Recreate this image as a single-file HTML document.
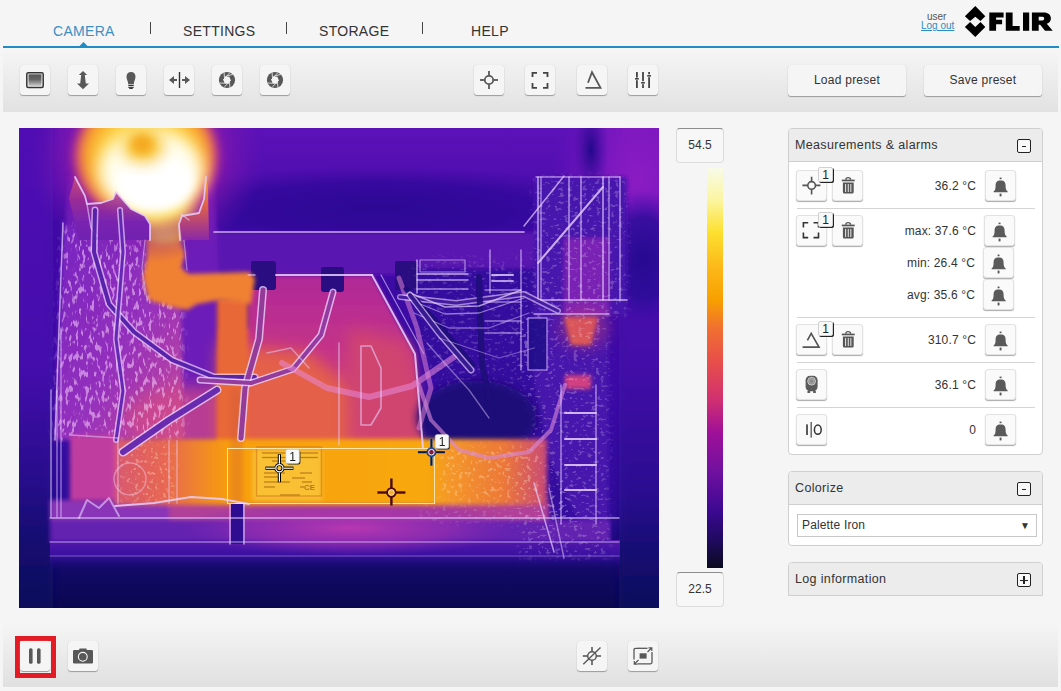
<!DOCTYPE html>
<html><head><meta charset="utf-8">
<style>
*{margin:0;padding:0;box-sizing:border-box}
html,body{width:1061px;height:691px;overflow:hidden;background:#f5f5f5;font-family:"Liberation Sans",sans-serif;color:#333}
.abs{position:absolute}
.nav{font-size:14px;color:#333;top:23px;line-height:16px;letter-spacing:0.3px}
.sep{width:1px;height:12px;background:#444;top:22px}
.bline{left:3px;top:46px;width:1056px;height:2px;background:#1e8cc6}
.tb{left:3px;top:53px;width:1055px;height:59px;background:linear-gradient(#f4f4f4,#e2e2e2)}
.btn{position:absolute;width:30px;height:30px;background:#f5f5f5;border-radius:3px;box-shadow:0 1px 1px #9a9a9a, 0 0 1px #d0d0d0}
.btn svg{position:absolute;left:0;top:0}
.pbtn{position:absolute;height:31px;background:#f5f5f5;border-radius:3px;box-shadow:0 1px 1px #9a9a9a, 0 0 1px #d0d0d0;font-size:12px;color:#333;text-align:center;line-height:31px;letter-spacing:0.25px}
.panel{position:absolute;left:788px;width:255px;background:#fff;border:1px solid #cfcfcf;border-radius:4px;overflow:hidden}
.ph{position:absolute;left:0;top:0;width:100%;height:33px;background:#ececec;border-bottom:1px solid #cfcfcf;font-size:12.5px;color:#333}
.ph span{position:absolute;left:6px;top:9px;letter-spacing:0.35px}
.tog{position:absolute;left:228px;top:10px;width:14px;height:14px;border:1px solid #222;border-radius:2px;background:#f8f8f8}
.mb{position:absolute;width:31px;height:31px;background:#fafafa;border-radius:3px;border:1px solid #e2e2e2;box-shadow:0 1px 1px #aaa}
.badge{position:absolute;width:15px;height:15px;background:#f8f8f8;border:1px solid #d0d0d0;border-radius:2px;box-shadow:1px 1px 0 #222;font-size:12px;line-height:14px;text-align:center;color:#222}
.val{position:absolute;font-size:12px;color:#333;text-align:right;white-space:nowrap;letter-spacing:0.15px}
.hr{position:absolute;left:8px;width:238px;height:1px;background:#d4d4d4}
.cbox{position:absolute;left:676px;width:48px;height:35px;background:#f7f7f7;border:1px solid #dcdcdc;border-top-color:#8c8c8c;border-radius:4px;font-size:12px;text-align:center;line-height:33px;color:#333}
</style></head><body>
<!-- header -->
<div class="abs nav" style="left:53px;color:#3a8fc2">CAMERA</div>
<div class="abs sep" style="left:150px"></div>
<div class="abs nav" style="left:183px">SETTINGS</div>
<div class="abs sep" style="left:286px"></div>
<div class="abs nav" style="left:319px">STORAGE</div>
<div class="abs sep" style="left:422px"></div>
<div class="abs nav" style="left:471px">HELP</div>
<div class="abs" style="left:927px;top:11px;font-size:10px;color:#555">user</div>
<div class="abs" style="left:921px;top:20px;font-size:10px;color:#2a8fc2;text-decoration:underline">Log out</div>
<svg class="abs" style="left:960px;top:0" width="101" height="45" viewBox="960 0 101 45">
<polygon fill="#000" points="975.3,6 985.3,16.2 980.5,21 975.3,16.8 970.1,21 964.9,16.2"/>
<polygon fill="#000" points="964.9,26.9 970.1,22 975.3,26.9 980.5,22 985.3,26.9 975.3,37"/>
</svg>
<svg class="abs" style="left:985px;top:5px" width="76" height="35" viewBox="985 5 76 35">
<path fill="#000" d="M989.3,12.5 H1003.6 V17.5 H996.1 V19.7 H1002.1 V24.3 H996.1 V30.8 H989.3 Z"/>
<path fill="#000" d="M1005.8,12.5 H1012.6 V26.1 H1019.7 V30.8 H1005.8 Z"/>
<path fill="#000" d="M1023,12.5 H1029.2 V30.8 H1023 Z"/>
<path fill="#000" fill-rule="evenodd" d="M1031.9,12.5 H1043.5 C1048.5,12.5 1050.9,15 1050.9,18.6 C1050.9,21.2 1049.3,23 1046.8,23.8 L1052.7,30.8 H1045 L1040.2,24.8 H1038.7 V30.8 H1031.9 Z M1038.7,16.8 V20.4 H1042.5 C1043.6,20.4 1044.2,19.7 1044.2,18.6 C1044.2,17.5 1043.6,16.8 1042.5,16.8 Z"/>
</svg>
<div class="abs bline"></div>
<svg class="abs" style="left:79px;top:42px" width="9" height="5"><polygon points="0,4.5 4.5,0 9,4.5" fill="#1e8cc6"/></svg>
<!-- toolbar -->
<div class="abs tb"></div>
<div class="btn" style="left:20px;top:65px"><svg width="30" height="30" viewBox="0 0 30 30"><rect x="6.8" y="7.8" width="16.4" height="14.6" rx="1.5" fill="none" stroke="#333" stroke-width="1.5"/><defs><linearGradient id="gg" x1="0" y1="0" x2="0" y2="1"><stop offset="0" stop-color="#555"/><stop offset="0.45" stop-color="#666"/><stop offset="1" stop-color="#c8c8c8"/></linearGradient></defs><rect x="8.5" y="9.3" width="13" height="11.6" fill="url(#gg)"/></svg></div>
<div class="btn" style="left:68px;top:65px"><svg width="30" height="30" viewBox="0 0 30 30"><path d="M15,6 L19.2,10 L16.8,10 L17.8,18.5 L21,18.5 L15,24.2 L9,18.5 L12.2,18.5 L13.2,10 L10.8,10 Z" fill="#585858"/></svg></div>
<div class="btn" style="left:116px;top:65px"><svg width="30" height="30" viewBox="0 0 30 30"><path d="M15,7 C17.8,7 19.5,9 19.5,11.8 C19.5,14.8 17.8,16.5 17.8,19.3 L12.2,19.3 C12.2,16.5 10.5,14.8 10.5,11.8 C10.5,9 12.2,7 15,7 Z" fill="#585858"/><rect x="12.3" y="19.9" width="5.4" height="1.1" fill="#333"/><rect x="12.3" y="21.8" width="5.4" height="1.1" fill="#333"/><rect x="13.3" y="23" width="3.4" height="1" fill="#333"/></svg></div>
<div class="btn" style="left:164px;top:65px"><svg width="30" height="30" viewBox="0 0 30 30"><rect x="14.8" y="7" width="1.4" height="16" fill="#333"/><path d="M5,15 L10,11 L10,13.9 L13,13.9 L13,16.1 L10,16.1 L10,19 Z" fill="#585858"/><path d="M26,15 L21,11 L21,13.9 L18,13.9 L18,16.1 L21,16.1 L21,19 Z" fill="#585858"/></svg></div>
<div class="btn" style="left:212px;top:65px"><svg width="30" height="30" viewBox="0 0 30 30"><circle cx="15" cy="15" r="8.1" fill="#585858"/><polygon points="13.2,11.7 17,11.8 18.8,15 16.8,18.3 13,18.2 11.2,15" fill="#f4f4f4"/><g stroke="#f4f4f4" stroke-width="0.8"><line x1="13.2" y1="11.7" x2="21" y2="9.2"/><line x1="17" y1="11.8" x2="18" y2="23"/><line x1="18.8" y1="15" x2="12" y2="22.5"/><line x1="16.8" y1="18.3" x2="7.5" y2="18"/><line x1="13" y1="18.2" x2="12" y2="7.2"/><line x1="11.2" y1="15" x2="18" y2="7.5"/></g></svg></div>
<div class="btn" style="left:260px;top:65px"><svg width="30" height="30" viewBox="0 0 30 30"><circle cx="15" cy="15" r="8.1" fill="#585858"/><polygon points="13.2,11.7 17,11.8 18.8,15 16.8,18.3 13,18.2 11.2,15" fill="#f4f4f4"/><g stroke="#f4f4f4" stroke-width="0.8"><line x1="13.2" y1="11.7" x2="21" y2="9.2"/><line x1="17" y1="11.8" x2="18" y2="23"/><line x1="18.8" y1="15" x2="12" y2="22.5"/><line x1="16.8" y1="18.3" x2="7.5" y2="18"/><line x1="13" y1="18.2" x2="12" y2="7.2"/><line x1="11.2" y1="15" x2="18" y2="7.5"/></g></svg></div>
<div class="btn" style="left:474px;top:65px"><svg width="30" height="30" viewBox="0 0 30 30"><circle cx="15" cy="15" r="4.2" fill="none" stroke="#585858" stroke-width="1.8"/><g stroke="#585858" stroke-width="1.8"><line x1="6" y1="15" x2="10.8" y2="15"/><line x1="19.2" y1="15" x2="24" y2="15"/><line x1="15" y1="6" x2="15" y2="10.8"/><line x1="15" y1="19.2" x2="15" y2="24"/></g></svg></div>
<div class="btn" style="left:525px;top:65px"><svg width="30" height="30" viewBox="0 0 30 30"><path d="M7.5,12 V7.8 H12 M18,7.8 H22.5 V12 M22.5,18 V22.8 H18 M12,22.8 H7.5 V18" fill="none" stroke="#444" stroke-width="1.8"/></svg></div>
<div class="btn" style="left:577px;top:65px"><svg width="30" height="30" viewBox="0 0 30 30"><path d="M8.5,22.8 H23.5 L15,7.2 L11,17.8" fill="none" stroke="#585858" stroke-width="1.8"/></svg></div>
<div class="btn" style="left:628px;top:65px"><svg width="30" height="30" viewBox="0 0 30 30"><g fill="#444"><rect x="8" y="7" width="1.8" height="5.6"/><rect x="7" y="13" width="3.8" height="1.6"/><rect x="8" y="15.2" width="1.8" height="7.8"/><rect x="14.1" y="7" width="1.8" height="9.2"/><rect x="13.1" y="17" width="3.8" height="1.6"/><rect x="14.1" y="19.2" width="1.8" height="3.8"/><rect x="20.2" y="7" width="1.8" height="2.2"/><rect x="19.2" y="10" width="3.8" height="1.6"/><rect x="20.2" y="12.2" width="1.8" height="10.8"/></g></svg></div>
<div class="pbtn" style="left:788px;top:65px;width:118px">Load preset</div>
<div class="pbtn" style="left:924px;top:65px;width:118px">Save preset</div>
<!-- thermal -->
<div id="thermal" class="abs" style="left:19px;top:128px;width:640px;height:480px;background:#3a0a90;overflow:hidden"><svg width="640" height="480" viewBox="0 0 640 480"><defs>
<filter id="b1" x="-10%" y="-10%" width="120%" height="120%"><feGaussianBlur stdDeviation="0.7"/></filter>
<filter id="b2" x="-20%" y="-20%" width="140%" height="140%"><feGaussianBlur stdDeviation="2"/></filter>
<filter id="b4" x="-30%" y="-30%" width="160%" height="160%"><feGaussianBlur stdDeviation="4"/></filter>
<filter id="b8" x="-40%" y="-40%" width="180%" height="180%"><feGaussianBlur stdDeviation="8"/></filter>
<filter id="b15" x="-50%" y="-50%" width="200%" height="200%"><feGaussianBlur stdDeviation="15"/></filter>
<filter id="b25" x="-60%" y="-60%" width="220%" height="220%"><feGaussianBlur stdDeviation="25"/></filter>
<filter id="tex" x="0" y="0" width="100%" height="100%"><feTurbulence type="fractalNoise" baseFrequency="0.3 0.12" numOctaves="2" seed="5"/><feColorMatrix type="matrix" values="0 0 0 0 0.95  0 0 0 0 0.62  0 0 0 0 0.98  8 0 0 0 -4.4"/><feGaussianBlur stdDeviation="0.6"/></filter>
<filter id="soft" x="-10%" y="-10%" width="120%" height="120%"><feGaussianBlur stdDeviation="5"/></filter>
<mask id="mMesh"><polygon points="44,97 160,108 165,312 36,312" fill="#fff" filter="url(#soft)"/></mask>
<mask id="mStruct"><polygon points="515,49 608,49 608,188 590,188 590,430 500,430 500,180 515,180" fill="#fff" filter="url(#soft)"/></mask>
<mask id="mCable"><polygon points="395,130 515,130 515,250 530,330 560,380 560,395 400,395 420,260 395,200" fill="#fff" filter="url(#soft)"/></mask>
<filter id="tex2" x="0" y="0" width="100%" height="100%"><feTurbulence type="fractalNoise" baseFrequency="0.22 0.3" numOctaves="2" seed="11"/><feColorMatrix type="matrix" values="0 0 0 0 0.9  0 0 0 0 0.8  0 0 0 0 1  9 0 0 0 -5.3"/><feGaussianBlur stdDeviation="0.5"/></filter>
<filter id="tex3" x="0" y="0" width="100%" height="100%"><feTurbulence type="fractalNoise" baseFrequency="0.25 0.25" numOctaves="2" seed="21"/><feColorMatrix type="matrix" values="0 0 0 0 1  0 0 0 0 0.85  0 0 0 0 0.6  9 0 0 0 -5.2"/><feGaussianBlur stdDeviation="0.6"/></filter>
<mask id="mCylR"><rect x="420" y="318" width="105" height="56" fill="#fff" filter="url(#soft)"/><rect x="100" y="314" width="56" height="60" fill="#fff" filter="url(#soft)"/></mask>
<linearGradient id="bg" x1="0" y1="0" x2="0" y2="1">
<stop offset="0" stop-color="#5c12b8"/><stop offset="0.1" stop-color="#500eb0"/><stop offset="0.2" stop-color="#3c0aa2"/><stop offset="0.55" stop-color="#3a0ca6"/><stop offset="0.8" stop-color="#2e0c98"/><stop offset="0.88" stop-color="#160a72"/><stop offset="1" stop-color="#0a0850"/>
</linearGradient>
<radialGradient id="halo" cx="0.5" cy="0.5" r="0.5">
<stop offset="0" stop-color="#fde868"/><stop offset="0.55" stop-color="#fcd040"/><stop offset="0.78" stop-color="#f8a428"/><stop offset="0.9" stop-color="#e05858"/><stop offset="1" stop-color="#b02098" stop-opacity="0"/>
</radialGradient>
<linearGradient id="cyl" x1="0" y1="0" x2="1" y2="0">
<stop offset="0" stop-color="#d85870"/><stop offset="0.12" stop-color="#e86850"/><stop offset="0.2" stop-color="#f08828"/><stop offset="0.27" stop-color="#f8a008"/><stop offset="0.72" stop-color="#f8a808"/><stop offset="0.77" stop-color="#f59828"/><stop offset="0.9" stop-color="#ec7838"/><stop offset="1" stop-color="#c84878"/>
</linearGradient>
<linearGradient id="panel" x1="0" y1="0" x2="0" y2="1">
<stop offset="0" stop-color="#b02898"/><stop offset="0.45" stop-color="#c43488"/><stop offset="1" stop-color="#dc5460"/>
</linearGradient>
<linearGradient id="mesh" x1="0" y1="0" x2="1" y2="1">
<stop offset="0" stop-color="#7424c0"/><stop offset="0.55" stop-color="#9430bc"/><stop offset="1" stop-color="#c84a98"/>
</linearGradient>
<clipPath id="cpMesh"><polygon points="44,97 160,108 165,312 36,312"/></clipPath>
<clipPath id="cpStruct"><polygon points="515,49 608,49 608,188 590,188 590,430 500,430 500,180 515,180"/></clipPath>
<clipPath id="cpCable"><polygon points="395,130 515,130 515,250 530,330 560,380 560,395 400,395 420,260 395,200"/></clipPath>
<clipPath id="cpBand"><rect x="31" y="372" width="580" height="60"/></clipPath>
</defs>
<rect x="0" y="0" width="640" height="480" fill="url(#bg)"/>
<defs>
<linearGradient id="lstrip" x1="0" y1="0" x2="0" y2="1"><stop offset="0" stop-color="#5010b4"/><stop offset="0.5" stop-color="#4410ac"/><stop offset="0.72" stop-color="#280c8c"/><stop offset="0.85" stop-color="#140a70"/><stop offset="1" stop-color="#0c0858"/></linearGradient>
<linearGradient id="rstrip" x1="0" y1="0" x2="0" y2="1"><stop offset="0" stop-color="#7a18c0"/><stop offset="0.2" stop-color="#5010b0"/><stop offset="0.5" stop-color="#4210a8"/><stop offset="0.75" stop-color="#2a0c90"/><stop offset="0.88" stop-color="#140a70"/><stop offset="1" stop-color="#0c0858"/></linearGradient>
<radialGradient id="rg_mag"><stop offset="0" stop-color="#8c1cc4"/><stop offset="0.6" stop-color="#8018c0" stop-opacity="0.7"/><stop offset="1" stop-color="#6010b8" stop-opacity="0"/></radialGradient>
<radialGradient id="rg_dark"><stop offset="0" stop-color="#2c0894"/><stop offset="0.6" stop-color="#30089a" stop-opacity="0.8"/><stop offset="1" stop-color="#3a0aa2" stop-opacity="0"/></radialGradient>
<radialGradient id="rg_dark2"><stop offset="0" stop-color="#260a90"/><stop offset="0.6" stop-color="#2a0c98" stop-opacity="0.8"/><stop offset="1" stop-color="#3a0ca8" stop-opacity="0"/></radialGradient>
<radialGradient id="rg_smudge"><stop offset="0" stop-color="#22088a"/><stop offset="1" stop-color="#3a0aa0" stop-opacity="0"/></radialGradient>
<linearGradient id="lfade" x1="0" y1="0" x2="1" y2="0"><stop offset="0" stop-color="#000" stop-opacity="0"/><stop offset="1" stop-color="#000" stop-opacity="0"/></linearGradient>
</defs>
<rect x="-10" y="-10" width="44" height="500" fill="url(#lstrip)" filter="url(#b4)"/>
<rect x="600" y="-10" width="50" height="500" fill="url(#rstrip)" filter="url(#b4)"/>
<ellipse cx="620" cy="50" rx="90" ry="110" fill="url(#rg_mag)"/>
<ellipse cx="360" cy="80" rx="250" ry="42" fill="url(#rg_dark)"/>
<ellipse cx="572" cy="22" rx="18" ry="50" fill="url(#rg_smudge)"/>
<ellipse cx="624" cy="130" rx="48" ry="68" fill="url(#rg_dark2)"/>
<g filter="url(#b2)">
<polygon points="515.0,49.0 608.0,49.0 608.0,188.0 590.0,188.0 590.0,430.0 500.0,430.0 500.0,180.0 515.0,180.0" fill="#4618ac" />
<polygon points="545.0,110.0 590.0,110.0 590.0,188.0 545.0,188.0" fill="#7a20b4" />
<rect x="195" y="104" width="320" height="43" fill="#5a18b0"/>
<polygon points="395.0,140.0 515.0,140.0 515.0,250.0 530.0,330.0 560.0,395.0 400.0,395.0 420.0,260.0 395.0,200.0" fill="#34109e" />
<polygon points="50.0,48.0 195.0,48.0 200.0,150.0 198.0,312.0 160.0,312.0 44.0,120.0" fill="#6c1cb8" />
<polygon points="44.0,97.0 160.0,108.0 165.0,312.0 36.0,312.0" fill="url(#mesh)" />
<ellipse cx="170" cy="290" rx="65" ry="32" fill="#d04a88" opacity="0.75" filter="url(#b8)"/>
</g>
<g filter="url(#b2)">
<polygon points="229.0,147.0 353.0,147.0 396.0,226.0 404.0,320.0 200.0,320.0 200.0,200.0 229.0,200.0" fill="url(#panel)" />
</g>
<polygon points="200.0,215.0 290.0,225.0 335.0,265.0 335.0,320.0 200.0,320.0" fill="#e46048" filter="url(#b8)"/>
<polygon points="330.0,200.0 390.0,215.0 404.0,320.0 330.0,320.0" fill="#d04470" filter="url(#b8)"/>
<rect x="198" y="170" width="31" height="150" fill="#e86838" filter="url(#b2)"/>
<g fill="#2a0a80" filter="url(#b1)"><rect x="232" y="133" width="25" height="29" rx="3"/><rect x="302" y="139" width="23" height="25" rx="3"/><rect x="376" y="133" width="22" height="29" rx="3"/></g>
<g filter="url(#b2)">
<polygon points="545.0,189.0 579.0,189.0 572.0,217.0 552.0,217.0" fill="#f07040" />
<rect x="546" y="247" width="26" height="14" fill="#d04080"/>
</g>
<ellipse cx="565" cy="200" rx="25" ry="20" fill="#c03878" opacity="0.5" filter="url(#b8)"/>
<g filter="url(#b2)">
<rect x="31" y="372" width="490" height="20" fill="#8a34b8"/>
<rect x="150" y="374" width="380" height="18" fill="#b04098"/>
<rect x="31" y="392" width="560" height="22" fill="#6420b0"/>
</g>
<defs><linearGradient id="bandfade" x1="0" y1="0" x2="0" y2="1"><stop offset="0" stop-color="#5418ac"/><stop offset="0.5" stop-color="#3a10a0"/><stop offset="1" stop-color="#1a0a78" stop-opacity="0"/></linearGradient>
<radialGradient id="pinkglow"><stop offset="0" stop-color="#b838b0"/><stop offset="0.6" stop-color="#a030b0" stop-opacity="0.6"/><stop offset="1" stop-color="#8028b0" stop-opacity="0"/></radialGradient></defs>
<rect x="31" y="412" width="570" height="30" fill="url(#bandfade)"/>
<ellipse cx="330" cy="400" rx="170" ry="28" fill="url(#pinkglow)"/>
<g mask="url(#mMesh)"><rect x="0" y="0" width="640" height="480" filter="url(#tex)" opacity="0.55"/></g>
<g mask="url(#mStruct)"><rect x="0" y="0" width="640" height="480" filter="url(#tex2)" opacity="0.22"/></g>
<g mask="url(#mCable)"><rect x="0" y="0" width="640" height="480" filter="url(#tex2)" opacity="0.15"/></g>
<ellipse cx="458" cy="290" rx="60" ry="38" fill="#1a0878" filter="url(#b4)"/>
<g filter="url(#b2)">
<polygon points="128.0,112.0 160.0,110.0 166.0,125.0 162.0,140.0 170.0,146.0 230.0,144.0 236.0,150.0 232.0,176.0 200.0,172.0 178.0,176.0 168.0,182.0 150.0,178.0 130.0,172.0 124.0,150.0 128.0,130.0" fill="#f08030" />
<polygon points="132.0,78.0 160.0,78.0 165.0,112.0 128.0,112.0" fill="#f8b428" />
</g>
<rect x="135" y="84" width="22" height="30" fill="#fbd040" filter="url(#b4)"/>
<polygon points="75.0,49.0 87.0,76.0 116.0,64.0 131.0,81.0 150.0,95.0 159.0,95.0 162.0,88.0 179.0,85.0 186.0,49.0" fill="#f07838" filter="url(#b4)"/>
<defs><radialGradient id="magglow"><stop offset="0" stop-color="#b02098"/><stop offset="0.5" stop-color="#a01ca8" stop-opacity="0.85"/><stop offset="1" stop-color="#7014b0" stop-opacity="0"/></radialGradient></defs>
<ellipse cx="127" cy="30" rx="118" ry="105" fill="url(#magglow)"/>
<ellipse cx="127" cy="28" rx="76" ry="70" fill="url(#halo)" filter="url(#b4)"/>
<ellipse cx="138" cy="78" rx="34" ry="20" fill="#fcd848" filter="url(#b8)"/>
<ellipse cx="132" cy="44" rx="52" ry="42" fill="#fffef0" filter="url(#b8)"/>
<ellipse cx="136" cy="54" rx="38" ry="28" fill="#ffffff" filter="url(#b4)"/>
<ellipse cx="124" cy="18" rx="20" ry="16" fill="#f8c028" filter="url(#b8)"/>
<ellipse cx="123" cy="16" rx="10" ry="9" fill="#f5a820" filter="url(#b4)"/>
<defs><linearGradient id="hous" x1="0" y1="0" x2="0" y2="1"><stop offset="0" stop-color="#d85868" stop-opacity="0.7"/><stop offset="0.35" stop-color="#a03090" stop-opacity="0.85"/><stop offset="0.7" stop-color="#7a24b0"/><stop offset="1" stop-color="#7020b0"/></linearGradient></defs>
<polygon points="56.0,49.0 66.0,68.0 68.0,76.0 82.0,75.0 94.0,71.0 97.0,64.0 112.0,81.0 126.0,88.0 131.0,95.0 131.0,112.0 60.0,112.0 50.0,70.0" fill="url(#hous)" filter="url(#b1)"/>
<defs><linearGradient id="hous2" x1="0" y1="0" x2="0" y2="1"><stop offset="0" stop-color="#f8b030" stop-opacity="0.8"/><stop offset="0.45" stop-color="#e06048"/><stop offset="1" stop-color="#8a28a8"/></linearGradient></defs>
<polygon points="187.0,49.0 185.0,71.0 180.0,85.0 163.0,88.0 160.0,95.0 163.0,112.0 190.0,112.0 189.0,60.0" fill="url(#hous2)" filter="url(#b1)"/>
<g filter="url(#b2)">
<rect x="51" y="307" width="50" height="66" fill="#c03ca0"/>
<rect x="96" y="311" width="432" height="66" fill="url(#cyl)"/>
<rect x="234" y="322" width="69" height="50" fill="#f8c030"/>
</g>
<rect x="211" y="262" width="13" height="115" fill="#d05838" opacity="0.3" filter="url(#b2)"/>
<g mask="url(#mCylR)"><rect x="0" y="0" width="640" height="480" filter="url(#tex3)" opacity="0.3"/></g>
<rect x="212" y="376" width="12" height="40" fill="#2e0c90" filter="url(#b1)"/>
<g filter="url(#b1)">
<polyline points="195.0,104.0 505.0,104.0" fill="none" stroke="#e8d0ff" stroke-width="1.6" opacity="0.8" stroke-linejoin="round" stroke-linecap="round" />
<polyline points="236.0,147.0 229.0,147.0" fill="none" stroke="#e8d0ff" stroke-width="1.5" opacity="0.7" stroke-linejoin="round" stroke-linecap="round" />
<polyline points="257.0,147.0 353.0,147.0" fill="none" stroke="#e8d0ff" stroke-width="2" opacity="0.85" stroke-linejoin="round" stroke-linecap="round" />
<polyline points="353.0,147.0 396.0,226.0 404.0,320.0" fill="none" stroke="#e8d0ff" stroke-width="2" opacity="0.85" stroke-linejoin="round" stroke-linecap="round" />
<polyline points="362.0,147.0 405.0,226.0" fill="none" stroke="#e8d0ff" stroke-width="1.2" opacity="0.6" stroke-linejoin="round" stroke-linecap="round" />
<polyline points="44.0,95.0 40.0,200.0 36.0,312.0" fill="none" stroke="#e8d0ff" stroke-width="1.5" opacity="0.7" stroke-linejoin="round" stroke-linecap="round" />
<polyline points="32.0,262.0 32.0,389.0" fill="none" stroke="#e8d0ff" stroke-width="1.5" opacity="0.6" stroke-linejoin="round" stroke-linecap="round" />
<polyline points="38.0,262.0 38.0,389.0" fill="none" stroke="#e8d0ff" stroke-width="1.5" opacity="0.5" stroke-linejoin="round" stroke-linecap="round" />
<polyline points="42.0,200.0 42.0,389.0" fill="none" stroke="#e8d0ff" stroke-width="1.5" opacity="0.5" stroke-linejoin="round" stroke-linecap="round" />
<polyline points="56.0,49.0 66.0,68.0 68.0,76.0 82.0,75.0 94.0,71.0 97.0,64.0 112.0,81.0 126.0,88.0 131.0,96.0 131.0,112.0" fill="none" stroke="#e8d0ff" stroke-width="1.8" opacity="0.85" stroke-linejoin="round" stroke-linecap="round" />
<polyline points="187.0,49.0 185.0,71.0 180.0,85.0 163.0,88.0 160.0,96.0 161.0,112.0" fill="none" stroke="#e8d0ff" stroke-width="1.8" opacity="0.85" stroke-linejoin="round" stroke-linecap="round" />
<polyline points="68.0,76.0 72.0,100.0 78.0,108.0" fill="none" stroke="#e8d0ff" stroke-width="1.5" opacity="0.6" stroke-linejoin="round" stroke-linecap="round" />
<polyline points="162.0,86.0 170.0,92.0" fill="none" stroke="#e8d0ff" stroke-width="1.5" opacity="0.6" stroke-linejoin="round" stroke-linecap="round" />
<polyline points="126.0,112.0 123.0,140.0 128.0,172.0" fill="none" stroke="#e8d0ff" stroke-width="1.2" opacity="0.5" stroke-linejoin="round" stroke-linecap="round" />
<polyline points="165.0,112.0 168.0,142.0" fill="none" stroke="#e8d0ff" stroke-width="1.2" opacity="0.5" stroke-linejoin="round" stroke-linecap="round" />
<polyline points="76.0,82.0 75.0,124.0 90.0,176.0 115.0,204.0 153.0,232.0 195.0,249.0 236.0,249.0" fill="none" stroke="#ecd4ff" stroke-width="7" opacity="0.7" stroke-linejoin="round" stroke-linecap="round" /><polyline points="76.0,82.0 75.0,124.0 90.0,176.0 115.0,204.0 153.0,232.0 195.0,249.0 236.0,249.0" fill="none" stroke="#4a14a4" stroke-width="4" opacity="0.9" stroke-linejoin="round" stroke-linecap="round" />
<polyline points="101.0,82.0 104.0,124.0 97.0,211.0 104.0,263.0 97.0,312.0" fill="none" stroke="#ecd4ff" stroke-width="6" opacity="0.7" stroke-linejoin="round" stroke-linecap="round" /><polyline points="101.0,82.0 104.0,124.0 97.0,211.0 104.0,263.0 97.0,312.0" fill="none" stroke="#5a18b0" stroke-width="3" opacity="0.9" stroke-linejoin="round" stroke-linecap="round" />
<polyline points="244.0,162.0 240.0,211.0 226.0,260.0 222.0,310.0" fill="none" stroke="#ecd4ff" stroke-width="8" opacity="0.8" stroke-linejoin="round" stroke-linecap="round" /><polyline points="244.0,162.0 240.0,211.0 226.0,260.0 222.0,310.0" fill="none" stroke="#8a2c90" stroke-width="5" opacity="0.9" stroke-linejoin="round" stroke-linecap="round" />
<polyline points="314.0,164.0 302.0,207.0 274.0,241.0 232.0,255.0 181.0,252.0" fill="none" stroke="#ecd4ff" stroke-width="7" opacity="0.8" stroke-linejoin="round" stroke-linecap="round" /><polyline points="314.0,164.0 302.0,207.0 274.0,241.0 232.0,255.0 181.0,252.0" fill="none" stroke="#8a2c98" stroke-width="4" opacity="0.9" stroke-linejoin="round" stroke-linecap="round" />
<polyline points="104.0,324.0 150.0,292.0 198.0,262.0" fill="none" stroke="#ecd4ff" stroke-width="9" opacity="0.8" stroke-linejoin="round" stroke-linecap="round" /><polyline points="104.0,324.0 150.0,292.0 198.0,262.0" fill="none" stroke="#5a1ca8" stroke-width="6" opacity="0.9" stroke-linejoin="round" stroke-linecap="round" />
<polyline points="263.0,235.0 308.0,260.0 350.0,269.0 393.0,258.0 435.0,229.0" fill="none" stroke="#e888d8" stroke-width="6" opacity="0.55" stroke-linejoin="round" stroke-linecap="round" />
<polyline points="380.0,150.0 398.0,200.0 412.0,260.0 400.0,300.0" fill="none" stroke="#e888d8" stroke-width="5" opacity="0.5" stroke-linejoin="round" stroke-linecap="round" />
<polyline points="400.0,257.0 412.0,292.0 440.0,322.0 470.0,330.0 510.0,324.0 532.0,302.0 546.0,257.0" fill="none" stroke="#d888d8" stroke-width="4" opacity="0.6" stroke-linejoin="round" stroke-linecap="round" />
<polyline points="519.0,49.0 519.0,172.0" fill="none" stroke="#e8d0ff" stroke-width="1.4" opacity="0.8" stroke-linejoin="round" stroke-linecap="round" />
<polyline points="522.0,49.0 522.0,172.0" fill="none" stroke="#e8d0ff" stroke-width="1.4" opacity="0.6" stroke-linejoin="round" stroke-linecap="round" />
<polyline points="550.0,49.0 550.0,172.0" fill="none" stroke="#e8d0ff" stroke-width="1.4" opacity="0.7" stroke-linejoin="round" stroke-linecap="round" />
<polyline points="562.0,49.0 562.0,172.0" fill="none" stroke="#e8d0ff" stroke-width="1.4" opacity="0.7" stroke-linejoin="round" stroke-linecap="round" />
<polyline points="584.0,49.0 584.0,172.0" fill="none" stroke="#e8d0ff" stroke-width="1.4" opacity="0.8" stroke-linejoin="round" stroke-linecap="round" />
<polyline points="590.0,49.0 590.0,172.0" fill="none" stroke="#e8d0ff" stroke-width="1.4" opacity="0.6" stroke-linejoin="round" stroke-linecap="round" />
<polyline points="601.0,49.0 601.0,172.0" fill="none" stroke="#e8d0ff" stroke-width="1.4" opacity="0.7" stroke-linejoin="round" stroke-linecap="round" />
<polyline points="519.0,135.0 584.0,59.0" fill="none" stroke="#e8d0ff" stroke-width="2" opacity="0.8" stroke-linejoin="round" stroke-linecap="round" />
<polyline points="545.0,48.0 505.0,98.0" fill="none" stroke="#e8d0ff" stroke-width="1.5" opacity="0.7" stroke-linejoin="round" stroke-linecap="round" />
<polyline points="515.0,172.0 608.0,172.0" fill="none" stroke="#e8d0ff" stroke-width="1.6" opacity="0.8" stroke-linejoin="round" stroke-linecap="round" />
<polyline points="515.0,186.0 590.0,186.0" fill="none" stroke="#e8d0ff" stroke-width="1.4" opacity="0.7" stroke-linejoin="round" stroke-linecap="round" />
<polyline points="517.0,49.0 601.0,49.0" fill="none" stroke="#e8d0ff" stroke-width="1.5" opacity="0.6" stroke-linejoin="round" stroke-linecap="round" />
<polyline points="398.0,146.0 449.0,146.0" fill="none" stroke="#e8d0ff" stroke-width="1.5" opacity="0.8" stroke-linejoin="round" stroke-linecap="round" />
<polyline points="398.0,152.0 449.0,152.0" fill="none" stroke="#e8d0ff" stroke-width="1.5" opacity="0.7" stroke-linejoin="round" stroke-linecap="round" />
<polyline points="398.0,161.0 449.0,161.0" fill="none" stroke="#e8d0ff" stroke-width="1.5" opacity="0.6" stroke-linejoin="round" stroke-linecap="round" />
<polyline points="401.0,132.0 446.0,132.0 446.0,144.0 401.0,144.0 401.0,132.0" fill="none" stroke="#e8d0ff" stroke-width="1.2" opacity="0.6" stroke-linejoin="round" stroke-linecap="round" />
<polyline points="381.0,169.0 437.0,175.0 505.0,166.0 539.0,183.0" fill="none" stroke="#ecd4ff" stroke-width="6" opacity="0.6" stroke-linejoin="round" stroke-linecap="round" /><polyline points="381.0,169.0 437.0,175.0 505.0,166.0 539.0,183.0" fill="none" stroke="#3a1098" stroke-width="3" opacity="0.9" stroke-linejoin="round" stroke-linecap="round" />
<polyline points="387.0,161.0 423.0,200.0 454.0,237.0" fill="none" stroke="#1e0a78" stroke-width="5" opacity="0.9" stroke-linejoin="round" stroke-linecap="round" />
<polyline points="460.0,149.0 463.0,237.0 470.0,270.0" fill="none" stroke="#1e0a78" stroke-width="6" opacity="0.9" stroke-linejoin="round" stroke-linecap="round" />
<polyline points="542.0,257.0 542.0,396.0" fill="none" stroke="#e8d0ff" stroke-width="1.5" opacity="0.6" stroke-linejoin="round" stroke-linecap="round" />
<polyline points="577.0,257.0 577.0,396.0" fill="none" stroke="#e8d0ff" stroke-width="1.5" opacity="0.6" stroke-linejoin="round" stroke-linecap="round" />
<polyline points="546.0,285.0 577.0,285.0" fill="none" stroke="#e8d0ff" stroke-width="2" opacity="0.85" stroke-linejoin="round" stroke-linecap="round" />
<polyline points="546.0,311.0 577.0,311.0" fill="none" stroke="#e8d0ff" stroke-width="2" opacity="0.85" stroke-linejoin="round" stroke-linecap="round" />
<polyline points="546.0,337.0 577.0,337.0" fill="none" stroke="#e8d0ff" stroke-width="2" opacity="0.85" stroke-linejoin="round" stroke-linecap="round" />
<polyline points="546.0,362.0 577.0,362.0" fill="none" stroke="#e8d0ff" stroke-width="2" opacity="0.85" stroke-linejoin="round" stroke-linecap="round" />
<polyline points="515.0,355.0 535.0,424.0" fill="none" stroke="#e8d0ff" stroke-width="1.5" opacity="0.7" stroke-linejoin="round" stroke-linecap="round" />
<polyline points="398.0,132.0 398.0,165.0" fill="none" stroke="#e8d0ff" stroke-width="1.5" opacity="0.7" stroke-linejoin="round" stroke-linecap="round" />
<polyline points="471.0,122.0 471.0,165.0" fill="none" stroke="#e8d0ff" stroke-width="1.5" opacity="0.6" stroke-linejoin="round" stroke-linecap="round" />
<polyline points="502.0,122.0 502.0,242.0" fill="none" stroke="#e8d0ff" stroke-width="1.5" opacity="0.6" stroke-linejoin="round" stroke-linecap="round" />
<polyline points="473.0,147.0 494.0,147.0" fill="none" stroke="#e8d0ff" stroke-width="1.8" opacity="0.8" stroke-linejoin="round" stroke-linecap="round" />
<polyline points="473.0,153.0 494.0,153.0" fill="none" stroke="#e8d0ff" stroke-width="1.8" opacity="0.7" stroke-linejoin="round" stroke-linecap="round" />
<polyline points="466.0,162.0 502.0,162.0" fill="none" stroke="#e8d0ff" stroke-width="1.3" opacity="0.55" stroke-linejoin="round" stroke-linecap="round" />
<polyline points="466.0,174.0 502.0,174.0" fill="none" stroke="#e8d0ff" stroke-width="1.3" opacity="0.55" stroke-linejoin="round" stroke-linecap="round" />
<polyline points="466.0,193.0 502.0,193.0" fill="none" stroke="#e8d0ff" stroke-width="1.3" opacity="0.55" stroke-linejoin="round" stroke-linecap="round" />
<polyline points="466.0,205.0 502.0,205.0" fill="none" stroke="#e8d0ff" stroke-width="1.3" opacity="0.55" stroke-linejoin="round" stroke-linecap="round" />
<polyline points="391.0,165.0 426.0,179.0 460.0,178.0 502.0,162.0" fill="none" stroke="#e8d0ff" stroke-width="1.5" opacity="0.7" stroke-linejoin="round" stroke-linecap="round" />
<polyline points="391.0,172.0 426.0,186.0 460.0,185.0 505.0,170.0" fill="none" stroke="#e8d0ff" stroke-width="1.3" opacity="0.55" stroke-linejoin="round" stroke-linecap="round" />
<polyline points="395.0,185.0 430.0,200.0 470.0,200.0 510.0,185.0" fill="none" stroke="#e8d0ff" stroke-width="1.3" opacity="0.45" stroke-linejoin="round" stroke-linecap="round" />
<polyline points="391.0,167.0 420.0,205.0 452.0,242.0" fill="none" stroke="#ecd4ff" stroke-width="7" opacity="0.65" stroke-linejoin="round" stroke-linecap="round" /><polyline points="391.0,167.0 420.0,205.0 452.0,242.0" fill="none" stroke="#2a0c88" stroke-width="4" opacity="0.9" stroke-linejoin="round" stroke-linecap="round" />
<rect x="509" y="190" width="19" height="52" fill="#22098a" stroke="#c8a8f8" stroke-width="1.2" opacity="0.85"/>
<polyline points="408.0,215.0 430.0,240.0 450.0,262.0 470.0,290.0" fill="none" stroke="#e8d0ff" stroke-width="1.3" opacity="0.45" stroke-linejoin="round" stroke-linecap="round" />
<polyline points="420.0,210.0 480.0,230.0 515.0,220.0" fill="none" stroke="#e8d0ff" stroke-width="1.3" opacity="0.4" stroke-linejoin="round" stroke-linecap="round" />
<polyline points="211.0,376.0 211.0,416.0" fill="none" stroke="#e8d0ff" stroke-width="1.5" opacity="0.7" stroke-linejoin="round" stroke-linecap="round" />
<polyline points="225.0,376.0 225.0,416.0" fill="none" stroke="#e8d0ff" stroke-width="1.5" opacity="0.7" stroke-linejoin="round" stroke-linecap="round" />
<polyline points="60.0,390.0 68.0,372.0 80.0,380.0 90.0,370.0 100.0,388.0" fill="none" stroke="#e8d0ff" stroke-width="2" opacity="0.6" stroke-linejoin="round" stroke-linecap="round" />
<polyline points="342.0,218.0 352.0,218.0 362.0,240.0 362.0,280.0 352.0,297.0 342.0,297.0 342.0,218.0" fill="none" stroke="#e8d0ff" stroke-width="1.6" opacity="0.6" stroke-linejoin="round" stroke-linecap="round" />
<polyline points="320.0,215.0 320.0,317.0" fill="none" stroke="#e8d0ff" stroke-width="1.5" opacity="0.55" stroke-linejoin="round" stroke-linecap="round" />
<polyline points="248.0,225.0 272.0,220.0 290.0,240.0" fill="none" stroke="#e8d0ff" stroke-width="1.5" opacity="0.5" stroke-linejoin="round" stroke-linecap="round" />
<polyline points="530.0,360.0 545.0,430.0" fill="none" stroke="#e8d0ff" stroke-width="1.5" opacity="0.5" stroke-linejoin="round" stroke-linecap="round" />
<polyline points="31.0,390.0 600.0,390.0" fill="none" stroke="#e8d0ff" stroke-width="1.3" opacity="0.7" stroke-linejoin="round" stroke-linecap="round" />
<polyline points="31.0,414.0 600.0,414.0" fill="none" stroke="#e8d0ff" stroke-width="1.3" opacity="0.5" stroke-linejoin="round" stroke-linecap="round" />
<polyline points="31.0,428.0 600.0,428.0" fill="none" stroke="#e8d0ff" stroke-width="1.2" opacity="0.4" stroke-linejoin="round" stroke-linecap="round" />
<polyline points="96.0,378.0 135.0,375.0 172.0,369.0 203.0,371.0 230.0,376.0" fill="none" stroke="#e8d0ff" stroke-width="1.8" opacity="0.85" stroke-linejoin="round" stroke-linecap="round" />
<polyline points="51.0,307.0 99.0,310.0" fill="none" stroke="#e8d0ff" stroke-width="1.5" opacity="0.5" stroke-linejoin="round" stroke-linecap="round" />
<circle cx="111" cy="351" r="16" fill="none" stroke="#f0c0e0" stroke-width="1.5" opacity="0.5"/>
<polyline points="99.0,310.0 99.0,375.0" fill="none" stroke="#e8d0ff" stroke-width="1.5" opacity="0.5" stroke-linejoin="round" stroke-linecap="round" />
<polyline points="150.0,313.0 150.0,375.0" fill="none" stroke="#e8d0ff" stroke-width="2" opacity="0.35" stroke-linejoin="round" stroke-linecap="round" />
<polyline points="158.0,313.0 158.0,375.0" fill="none" stroke="#e8d0ff" stroke-width="2" opacity="0.35" stroke-linejoin="round" stroke-linecap="round" />
</g>
<g filter="url(#b1)" opacity="0.45">
<rect x="237.5" y="319" width="65" height="49" fill="none" stroke="#c86010" stroke-width="1.4"/>
<line x1="243" y1="325" x2="273" y2="325" stroke="#7a3000" stroke-width="1.3"/>
<line x1="281" y1="325" x2="299" y2="325" stroke="#7a3000" stroke-width="1.3"/>
<line x1="243" y1="329.5" x2="271" y2="329.5" stroke="#7a3000" stroke-width="1.3"/>
<line x1="281" y1="329.5" x2="299" y2="329.5" stroke="#7a3000" stroke-width="1.3"/>
<line x1="253" y1="333" x2="281" y2="333" stroke="#7a3000" stroke-width="1.3"/>
<line x1="245" y1="345" x2="266" y2="345" stroke="#7a3000" stroke-width="1.3"/>
<line x1="281" y1="345" x2="293" y2="345" stroke="#7a3000" stroke-width="1.3"/>
<line x1="245" y1="349" x2="261" y2="349" stroke="#7a3000" stroke-width="1.3"/>
<line x1="273" y1="350" x2="286" y2="350" stroke="#7a3000" stroke-width="1.3"/>
<line x1="245" y1="354" x2="271" y2="354" stroke="#7a3000" stroke-width="1.3"/>
<line x1="283" y1="354" x2="293" y2="354" stroke="#7a3000" stroke-width="1.3"/>
<line x1="245" y1="359" x2="256" y2="359" stroke="#7a3000" stroke-width="1.3"/>
<line x1="281" y1="359" x2="285" y2="359" stroke="#7a3000" stroke-width="1.3"/>
<line x1="261" y1="367" x2="281" y2="367" stroke="#7a3000" stroke-width="1.3"/>
<text x="285" y="362" font-family="Liberation Sans" font-size="8" font-weight="bold" fill="#5a2000">CE</text>
</g>
<rect x="208.5" y="320.5" width="207" height="55" fill="none" stroke="#f8e4a8" stroke-width="1"/>
<g stroke="#000" stroke-width="3.2"><line x1="246.39999999999998" y1="340.2" x2="255.89999999999998" y2="340.2"/><line x1="264.9" y1="340.2" x2="274.4" y2="340.2"/><line x1="260.4" y1="326.2" x2="260.4" y2="335.7"/><line x1="260.4" y1="344.7" x2="260.4" y2="354.2"/></g>
<circle cx="260.4" cy="340.2" r="3.6" fill="none" stroke="#000" stroke-width="3"/>
<g stroke="#fff" stroke-width="1.2"><line x1="246.89999999999998" y1="340.2" x2="255.89999999999998" y2="340.2"/><line x1="264.9" y1="340.2" x2="273.9" y2="340.2"/><line x1="260.4" y1="326.7" x2="260.4" y2="335.7"/><line x1="260.4" y1="344.7" x2="260.4" y2="353.7"/></g>
<circle cx="260.4" cy="340.2" r="3.6" fill="none" stroke="#fff" stroke-width="1.2"/>
<g stroke="#4a0a10" stroke-width="2.4"><line x1="358.4" y1="364.5" x2="386.4" y2="364.5"/><line x1="372.4" y1="350.5" x2="372.4" y2="377.5"/></g>
<circle cx="372.4" cy="364.5" r="4.2" fill="#f8a020" stroke="#4a0a10" stroke-width="2"/><circle cx="372.4" cy="364.5" r="2.8" fill="#f8b030" stroke="#f8e0a0" stroke-width="1"/>
<g stroke="#c0d0f0" stroke-width="3.2" opacity="0.6"><line x1="398.9" y1="324.2" x2="425.9" y2="324.2"/><line x1="412.4" y1="310.7" x2="412.4" y2="337.7"/></g>
<g stroke="#0c1c44" stroke-width="2.2"><line x1="398.9" y1="324.2" x2="425.9" y2="324.2"/><line x1="412.4" y1="310.7" x2="412.4" y2="337.7"/></g>
<circle cx="412.4" cy="324.2" r="4.2" fill="#a02040" stroke="#1a4c90" stroke-width="1.6"/><circle cx="412.4" cy="324.2" r="2.8" fill="#802040" stroke="#f0f4ff" stroke-width="1"/>
<rect x="267.8" y="322.4" width="13.599999999999966" height="14.100000000000023" rx="2" fill="#222"/><rect x="266.8" y="321.4" width="13.599999999999966" height="14.100000000000023" rx="2" fill="#f8f8f8" stroke="#c8c8c8" stroke-width="0.6"/><text x="273.6" y="332.75" text-anchor="middle" font-family="Liberation Sans" font-size="12" fill="#222">1</text>
<rect x="417.2" y="307.6" width="13.600000000000023" height="13.899999999999977" rx="2" fill="#222"/><rect x="416.2" y="306.6" width="13.600000000000023" height="13.899999999999977" rx="2" fill="#f8f8f8" stroke="#c8c8c8" stroke-width="0.6"/><text x="423.0" y="317.85" text-anchor="middle" font-family="Liberation Sans" font-size="12" fill="#222">1</text></svg></div>
<!-- colorbar -->
<div class="cbox" style="top:128px">54.5</div>
<div class="abs" style="left:707px;top:168px;width:16px;height:400px;background:linear-gradient(#f8fbe8 0%,#fbf5a0 8%,#fde030 16%,#fcb818 25%,#f7a000 33%,#f07030 40%,#e85048 48%,#d03070 58%,#a01098 66%,#7010a0 76%,#3a0890 86%,#200a60 93%,#0a0a20 100%)"></div>
<div class="cbox" style="top:572px">22.5</div>
<!-- right panels -->
<div class="panel" style="top:128px;height:327px">
  <div class="ph"><span>Measurements &amp; alarms</span><div class="tog"><div style="position:absolute;left:4px;top:6px;width:4px;height:1px;background:#222"></div></div></div>
<div class="mb" style="left:7px;top:41px"><svg width="29" height="29" viewBox="1 1 29 29" style="position:absolute;left:0;top:0"><circle cx="15.6" cy="15.4" r="3.8" fill="none" stroke="#555" stroke-width="1.6"/><g stroke="#555" stroke-width="1.6"><line x1="6.4" y1="15.4" x2="11.8" y2="15.4"/><line x1="19.4" y1="15.4" x2="24.4" y2="15.4"/><line x1="15.6" y1="6.8" x2="15.6" y2="11.6"/><line x1="15.6" y1="19.2" x2="15.6" y2="24.5"/></g></svg></div><div class="mb" style="left:43px;top:41px"><svg width="29" height="29" viewBox="1 1 29 29" style="position:absolute;left:0;top:0"><path d="M13.8,9.7 Q13.8,7.6 16,7.6 Q18.6,7.6 18.6,9.7" fill="none" stroke="#555" stroke-width="1.3"/><rect x="9.8" y="9.6" width="12.9" height="1.7" fill="#555"/><path d="M10.9,12.6 H21.7 V22 Q21.7,23.5 20.2,23.5 H12.4 Q10.9,23.5 10.9,22 Z" fill="#555"/><g fill="#fafafa"><rect x="13.2" y="14" width="0.9" height="8"/><rect x="15.8" y="14" width="0.9" height="8"/><rect x="18.4" y="14" width="0.9" height="8"/></g></svg></div><div class="badge" style="left:29px;top:38px">1</div><div class="val" style="left:37px;top:49.8px;width:150px;line-height:14px">36.2 °C</div><div class="mb" style="left:196px;top:41px"><svg width="29" height="29" viewBox="1 1 29 29" style="position:absolute;left:0;top:0"><rect x="14.6" y="7.6" width="1.9" height="1.6" fill="#555"/><path d="M8.6,22.3 L22.7,22.3 L22.7,21.6 C21,20.3 20.6,18.5 20.6,15.5 C20.6,12.5 19.5,10.5 15.6,10.5 C11.7,10.5 10.6,12.5 10.6,15.5 C10.6,18.5 10.2,20.3 8.6,21.6 Z" fill="#5a5a5a"/><rect x="14.6" y="23.6" width="1.9" height="2.8" fill="#555"/></svg></div><div class="hr" style="top:79px"></div><div class="mb" style="left:7px;top:86px"><svg width="29" height="29" viewBox="1 1 29 29" style="position:absolute;left:0;top:0"><path d="M7.4,12.4 V7.7 H12.2 M17.5,7.7 H22.5 V12.4 M22.5,17.4 V22.6 H17.5 M12.2,22.6 H7.4 V17.4" fill="none" stroke="#333" stroke-width="1.6"/></svg></div><div class="mb" style="left:43px;top:86px"><svg width="29" height="29" viewBox="1 1 29 29" style="position:absolute;left:0;top:0"><path d="M13.8,9.7 Q13.8,7.6 16,7.6 Q18.6,7.6 18.6,9.7" fill="none" stroke="#555" stroke-width="1.3"/><rect x="9.8" y="9.6" width="12.9" height="1.7" fill="#555"/><path d="M10.9,12.6 H21.7 V22 Q21.7,23.5 20.2,23.5 H12.4 Q10.9,23.5 10.9,22 Z" fill="#555"/><g fill="#fafafa"><rect x="13.2" y="14" width="0.9" height="8"/><rect x="15.8" y="14" width="0.9" height="8"/><rect x="18.4" y="14" width="0.9" height="8"/></g></svg></div><div class="badge" style="left:29px;top:83px">1</div><div class="val" style="left:37px;top:95.3px;width:150px;line-height:14px">max: 37.6 °C</div><div class="mb" style="left:195px;top:86px"><svg width="29" height="29" viewBox="1 1 29 29" style="position:absolute;left:0;top:0"><rect x="14.6" y="7.6" width="1.9" height="1.6" fill="#555"/><path d="M8.6,22.3 L22.7,22.3 L22.7,21.6 C21,20.3 20.6,18.5 20.6,15.5 C20.6,12.5 19.5,10.5 15.6,10.5 C11.7,10.5 10.6,12.5 10.6,15.5 C10.6,18.5 10.2,20.3 8.6,21.6 Z" fill="#5a5a5a"/><rect x="14.6" y="23.6" width="1.9" height="2.8" fill="#555"/></svg></div><div class="val" style="left:36px;top:127.1px;width:150px;line-height:14px">min: 26.4 °C</div><div class="mb" style="left:194px;top:118px"><svg width="29" height="29" viewBox="1 1 29 29" style="position:absolute;left:0;top:0"><rect x="14.6" y="7.6" width="1.9" height="1.6" fill="#555"/><path d="M8.6,22.3 L22.7,22.3 L22.7,21.6 C21,20.3 20.6,18.5 20.6,15.5 C20.6,12.5 19.5,10.5 15.6,10.5 C11.7,10.5 10.6,12.5 10.6,15.5 C10.6,18.5 10.2,20.3 8.6,21.6 Z" fill="#5a5a5a"/><rect x="14.6" y="23.6" width="1.9" height="2.8" fill="#555"/></svg></div><div class="val" style="left:36px;top:159.1px;width:150px;line-height:14px">avg: 35.6 °C</div><div class="mb" style="left:194px;top:150px"><svg width="29" height="29" viewBox="1 1 29 29" style="position:absolute;left:0;top:0"><rect x="14.6" y="7.6" width="1.9" height="1.6" fill="#555"/><path d="M8.6,22.3 L22.7,22.3 L22.7,21.6 C21,20.3 20.6,18.5 20.6,15.5 C20.6,12.5 19.5,10.5 15.6,10.5 C11.7,10.5 10.6,12.5 10.6,15.5 C10.6,18.5 10.2,20.3 8.6,21.6 Z" fill="#5a5a5a"/><rect x="14.6" y="23.6" width="1.9" height="2.8" fill="#555"/></svg></div><div class="hr" style="top:188px"></div><div class="mb" style="left:7px;top:195px"><svg width="29" height="29" viewBox="1 1 29 29" style="position:absolute;left:0;top:0"><path d="M6.6,23.2 H23 L15.2,9.4 L11.4,16.3" fill="none" stroke="#555" stroke-width="1.7"/></svg></div><div class="mb" style="left:43px;top:195px"><svg width="29" height="29" viewBox="1 1 29 29" style="position:absolute;left:0;top:0"><path d="M13.8,9.7 Q13.8,7.6 16,7.6 Q18.6,7.6 18.6,9.7" fill="none" stroke="#555" stroke-width="1.3"/><rect x="9.8" y="9.6" width="12.9" height="1.7" fill="#555"/><path d="M10.9,12.6 H21.7 V22 Q21.7,23.5 20.2,23.5 H12.4 Q10.9,23.5 10.9,22 Z" fill="#555"/><g fill="#fafafa"><rect x="13.2" y="14" width="0.9" height="8"/><rect x="15.8" y="14" width="0.9" height="8"/><rect x="18.4" y="14" width="0.9" height="8"/></g></svg></div><div class="badge" style="left:29px;top:192px">1</div><div class="val" style="left:37px;top:203.8px;width:150px;line-height:14px">310.7 °C</div><div class="mb" style="left:196px;top:195px"><svg width="29" height="29" viewBox="1 1 29 29" style="position:absolute;left:0;top:0"><rect x="14.6" y="7.6" width="1.9" height="1.6" fill="#555"/><path d="M8.6,22.3 L22.7,22.3 L22.7,21.6 C21,20.3 20.6,18.5 20.6,15.5 C20.6,12.5 19.5,10.5 15.6,10.5 C11.7,10.5 10.6,12.5 10.6,15.5 C10.6,18.5 10.2,20.3 8.6,21.6 Z" fill="#5a5a5a"/><rect x="14.6" y="23.6" width="1.9" height="2.8" fill="#555"/></svg></div><div class="hr" style="top:233px"></div><div class="mb" style="left:7px;top:240px"><svg width="29" height="29" viewBox="1 1 29 29" style="position:absolute;left:0;top:0"><rect x="9.6" y="6.8" width="12" height="15.5" rx="4.5" fill="#5a5a5a"/><rect x="11.3" y="22" width="3" height="2" rx="0.8" fill="#5a5a5a"/><rect x="17" y="22" width="3" height="2" rx="0.8" fill="#5a5a5a"/><circle cx="15.6" cy="12.2" r="3.9" fill="#8a8a8a" stroke="#ddd" stroke-width="0.8"/><circle cx="15.6" cy="12.2" r="2.2" fill="#888" stroke="#bbb" stroke-width="0.6"/></svg></div><div class="val" style="left:37px;top:248.8px;width:150px;line-height:14px">36.1 °C</div><div class="mb" style="left:196px;top:240px"><svg width="29" height="29" viewBox="1 1 29 29" style="position:absolute;left:0;top:0"><rect x="14.6" y="7.6" width="1.9" height="1.6" fill="#555"/><path d="M8.6,22.3 L22.7,22.3 L22.7,21.6 C21,20.3 20.6,18.5 20.6,15.5 C20.6,12.5 19.5,10.5 15.6,10.5 C11.7,10.5 10.6,12.5 10.6,15.5 C10.6,18.5 10.2,20.3 8.6,21.6 Z" fill="#5a5a5a"/><rect x="14.6" y="23.6" width="1.9" height="2.8" fill="#555"/></svg></div><div class="hr" style="top:278px"></div><div class="mb" style="left:7px;top:285px"><svg width="29" height="29" viewBox="1 1 29 29" style="position:absolute;left:0;top:0"><rect x="10.2" y="10.4" width="1.6" height="10.6" fill="#333"/><rect x="14.6" y="8" width="1.1" height="15.6" fill="#333"/><ellipse cx="21.8" cy="15.7" rx="3.4" ry="4.6" fill="none" stroke="#333" stroke-width="1.5"/></svg></div><div class="val" style="left:37px;top:293.8px;width:150px;line-height:14px">0</div><div class="mb" style="left:196px;top:285px"><svg width="29" height="29" viewBox="1 1 29 29" style="position:absolute;left:0;top:0"><rect x="14.6" y="7.6" width="1.9" height="1.6" fill="#555"/><path d="M8.6,22.3 L22.7,22.3 L22.7,21.6 C21,20.3 20.6,18.5 20.6,15.5 C20.6,12.5 19.5,10.5 15.6,10.5 C11.7,10.5 10.6,12.5 10.6,15.5 C10.6,18.5 10.2,20.3 8.6,21.6 Z" fill="#5a5a5a"/><rect x="14.6" y="23.6" width="1.9" height="2.8" fill="#555"/></svg></div>
</div>
<div class="panel" style="top:471px;height:75px">
  <div class="ph"><span>Colorize</span><div class="tog"><div style="position:absolute;left:4px;top:6px;width:4px;height:1px;background:#222"></div></div></div>
  <div class="abs" style="left:8px;top:42px;width:240px;height:23px;border:1px solid #c8c8c8;background:#fff;font-size:12px;line-height:21px;padding-left:4px;letter-spacing:0.15px">Palette Iron<span style="position:absolute;right:6px;top:0;font-size:10px">&#9660;</span></div>
</div>
<div class="panel" style="top:562px;height:34px;border-radius:4px 4px 0 0">
  <div class="ph"><span>Log information</span><div class="tog"><div style="position:absolute;left:2px;top:5.5px;width:8px;height:1.2px;background:#222"></div><div style="position:absolute;left:5.4px;top:2px;width:1.2px;height:8px;background:#222"></div></div></div>
</div>
<!-- bottom bar -->
<div class="abs" style="left:3px;top:620px;width:1055px;height:67px;background:linear-gradient(#f6f6f6,#e0e0e0)"></div>
<div class="abs" style="left:15px;top:636px;width:41px;height:42px;background:#e21b24"></div><div class="abs" style="left:20px;top:641px;width:31px;height:32px;background:#f4f4f4"></div>
<div class="btn" style="left:20px;top:641px"><svg width="30" height="30" viewBox="0 0 30 30"><rect x="9" y="7.2" width="3.6" height="15.6" rx="1.6" fill="#585858"/><rect x="17" y="7.2" width="3.6" height="15.6" rx="1.6" fill="#585858"/></svg></div>
<div class="btn" style="left:68px;top:641px"><svg width="30" height="30" viewBox="0 0 30 30"><rect x="5" y="9" width="20" height="13.5" rx="1.2" fill="#585858"/><rect x="11.2" y="7.4" width="7.5" height="2.5" rx="0.6" fill="#585858"/><circle cx="14.8" cy="15.8" r="4.4" fill="none" stroke="#fafafa" stroke-width="1.1"/></svg></div>
<div class="btn" style="left:577px;top:641px"><svg width="30" height="30" viewBox="0 0 30 30"><circle cx="15" cy="15" r="4.3" fill="none" stroke="#585858" stroke-width="1.5"/><g stroke="#585858" stroke-width="1.6"><line x1="5.8" y1="15" x2="10.5" y2="15"/><line x1="19.5" y1="15" x2="24" y2="15"/><line x1="15" y1="6" x2="15" y2="10.5"/><line x1="15" y1="19.5" x2="15" y2="24"/><line x1="6.3" y1="23.3" x2="23.5" y2="6.4" stroke-width="1.4"/></g></svg></div>
<div class="btn" style="left:628px;top:641px"><svg width="30" height="30" viewBox="0 0 30 30"><path d="M10.5,7.3 H7.5 Q6,7.3 6,8.8 V18.5 M9.5,22.8 H22.5 Q24,22.8 24,21.3 V11" fill="none" stroke="#585858" stroke-width="1.3"/><path d="M19.5,7.3 H10" stroke="#585858" stroke-width="1.3"/><rect x="11.6" y="12.3" width="7" height="5.3" fill="#585858"/><path d="M19.5,11 L23.8,6.8 M20.5,6.8 H23.8 V10 M10.5,19 L6.3,23.2 M6.3,20 V23.2 H9.5" fill="none" stroke="#585858" stroke-width="1.2"/></svg></div>
</body></html>
